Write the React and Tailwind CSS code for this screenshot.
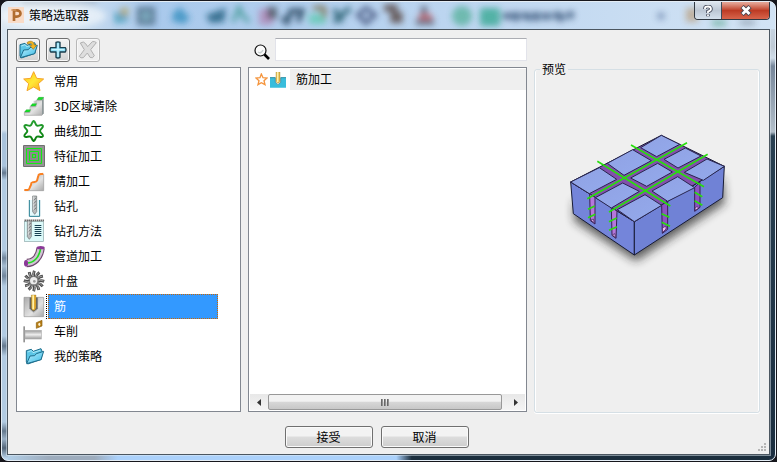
import { useState } from "react";
import clsx from "clsx";

function FolderShape() {
  return (
    <>
      <path d="M10 20 L25 16 L31 22 L54 14 L58 24 L55 46 L14 60 L10 54 Z" fill="#5cc6e6" stroke="#1d6d8c" strokeWidth="3" strokeLinejoin="round" />
      <path d="M11 59 L21 36 L35 35 L40 29 L62 22 L54 47 Z" fill="url(#folderFill)" stroke="#1d6d8c" strokeWidth="3" strokeLinejoin="round" />
      <path d="M14 24 L25 20 L30 26 L52 19" fill="none" stroke="#d2f7ff" strokeWidth="2" />
    </>
  );
}

function Drill({ x }) {
  return (
    <g transform={`translate(${x} 0)`}>
      <path d="M1 6 H13 V53 L7 61 L1 53 Z" fill="#b9bcbd" stroke="#6d7274" strokeWidth="2" />
      <path d="M2 20 L12 12 M2 30 L12 21 M2 40 L12 31 M2 50 L12 41" stroke="#777c7f" strokeWidth="3" />
      <path d="M4 7 V50" stroke="#f4f4f4" strokeWidth="2" />
    </g>
  );
}

const blades = [0, 30, 60, 90, 120, 150, 180, 210, 240, 270, 300, 330];

const icons = {
  star: (
    <path
      d="M32 8 L41 28 L62 30 L46 44 L51 65 L32 54 L12 65 L17 44 L2 30 L23 28 Z"
      fill="url(#starFill)"
      stroke="#f5a52a"
      strokeWidth="3"
      strokeLinejoin="round"
    />
  ),
  area: (
    <>
      <path d="M4 64 V54 L9 49 L22 49 V37 L27 32 H32 V20 L43 20 V14 L48 10 H62 V58 L57 64 Z" fill="url(#metal)" />
      <path d="M57 17 L62 10 V58 L57 64 Z" fill="#8e9899" />
      <path d="M4 64 H57 M4 64 V55 H21 V38 H39 V19 H56" fill="none" stroke="#a0a0a0" strokeWidth="2" />
      <path d="M5 54 L10 47 H23 L19 54 Z M23 36 L28 29 H41 L37 36 Z M42 17 L47 10 H62 L57 17 Z" fill="#18e026" stroke="#159b2b" strokeWidth="1" />
    </>
  ),
  curve: (
    <path
      d="M32 6 C38 8 36 17 42 20 C48 22 55 15 59 20 C63 26 51 30 51 36 C51 42 63 46 59 52 C55 57 48 50 42 53 C36 56 38 64 32 66 C26 64 28 56 22 53 C16 50 9 57 5 52 C1 46 13 42 13 36 C13 30 1 26 5 20 C9 15 16 22 22 20 C28 17 26 8 32 6 Z"
      fill="none"
      stroke="url(#greenLine)"
      strokeWidth="6"
    />
  ),
  feature: (
    <>
      <rect x="0" y="3" width="66" height="66" rx="3" fill="#707070" />
      <rect x="3" y="6" width="60" height="60" fill="#959595" />
      <rect x="9" y="12" width="48" height="48" rx="3" fill="#12ec12" />
      <rect x="12" y="15" width="42" height="42" fill="#8c8c8c" />
      <rect x="18" y="21" width="30" height="30" rx="2" fill="#12ec12" />
      <rect x="21" y="24" width="24" height="24" fill="#8c8c8c" />
      <rect x="27" y="30" width="12" height="12" fill="#12ec12" />
      <rect x="30" y="33" width="6" height="6" fill="#8c8c8c" />
    </>
  ),
  finish: (
    <>
      <path d="M5 64 L21 59 L29 43 L43 37 L48 19 L62 14 V65 H5 Z" fill="url(#metal)" />
      <path d="M5 65 H62 V16" fill="none" stroke="#999" strokeWidth="2" />
      <path d="M4 63 H14 C21 62 19 55 23 50 C27 45 21 43 28 40 C34 37 39 41 42 35 L46 20 C47 14 53 16 61 14" fill="none" stroke="#f98022" strokeWidth="6" />
    </>
  ),
  drill: (
    <>
      <path d="M19 18 V67 H50 V18" fill="#e5fafd" stroke="#247c91" strokeWidth="3" />
      <Drill x={28} />
    </>
  ),
  method: (
    <>
      <rect x="4.5" y="7.5" width="57" height="60" fill="#dcfafa" stroke="#8ba8a9" strokeWidth="2" />
      <path d="M5 4 H62" stroke="#222" strokeWidth="5" strokeDasharray="3 3" />
      <Drill x={12} />
      <path d="M35 19.5 H55 M35 25.5 H55 M35 31.5 H55 M35 37.5 H55 M35 43.5 H55 M35 49.5 H55" stroke="#174052" strokeWidth="3" />
    </>
  ),
  pipe: (
    <>
      <path d="M11 57 C31 57 49 42 53 12" fill="none" stroke="#70466f" strokeWidth="25" />
      <path d="M11 57 C31 57 49 42 53 12" fill="none" stroke="#d0c4d3" strokeWidth="18" />
      <path d="M11 57 C31 57 49 42 53 12" fill="none" stroke="#20dc20" strokeWidth="5" />
      <ellipse cx="9" cy="58" rx="6" ry="10" fill="#8b3998" />
      <ellipse cx="53" cy="11" rx="12" ry="5" fill="#8b3998" />
    </>
  ),
  blisk: (
    <g transform="translate(33 36)">
      {blades.map((a) => (
        <g key={a} transform={`rotate(${a})`}>
          <path d="M-3 -10 Q-8 -22 -3 -32 L5 -29 Q1 -20 4 -10 Z" fill="#4c4c4c" />
          <path d="M-1 -12 Q-4 -20 0 -29" fill="none" stroke="#bcbcbc" strokeWidth="2" />
        </g>
      ))}
      <circle r="14" fill="#777" />
      <circle cx="-1" cy="-1" r="11" fill="#ececec" />
      <circle cx="1" cy="1" r="4" fill="#999" />
    </g>
  ),
  rib: (
    <>
      <path d="M3 10 H20 V45 L32 56 L44 45 V10 H62 V68 H3 Z" fill="url(#metal)" stroke="#999" strokeWidth="2" />
      <path d="M20 10 V44 L32 54 L44 44 V10" fill="#656565" />
      <path d="M25 3 H39 V42 L35 49 H29 L25 42 Z" fill="#e2ab32" stroke="#8a6a1f" strokeWidth="1" />
      <path d="M30.5 4 V46" stroke="#fff2aa" strokeWidth="5" />
    </>
  ),
  turning: (
    <>
      <rect x="1" y="22" width="5" height="48" fill="#929292" />
      <rect x="6" y="34" width="49" height="26" fill="url(#bar)" stroke="#b0b0b0" strokeWidth="2" />
      <path d="M40 11 L57 4 V21 L40 28 Z" fill="#b77e16" stroke="#8c600f" strokeWidth="2" />
      <ellipse cx="49" cy="16" rx="3" ry="5" fill="#fff3d5" />
    </>
  ),
  folder: <FolderShape />,
};

const categories = [
  ["star", "常用"],
  ["area", "3D区域清除"],
  ["curve", "曲线加工"],
  ["feature", "特征加工"],
  ["finish", "精加工"],
  ["drill", "钻孔"],
  ["method", "钻孔方法"],
  ["pipe", "管道加工"],
  ["blisk", "叶盘"],
  ["rib", "筋"],
  ["turning", "车削"],
  ["folder", "我的策略"],
];

// Shared gradients for the small icons
function IconDefs() {
  return (
    <svg className="absolute h-0 w-0" aria-hidden="true">
      <defs>
        <linearGradient id="starFill" x1="0" y1="0" x2="1" y2="1">
          <stop offset="0" stopColor="#ffc814" />
          <stop offset=".5" stopColor="#ffe838" />
          <stop offset="1" stopColor="#ffa414" />
        </linearGradient>
        <linearGradient id="metal" x1="0" y1="0" x2="1" y2="1">
          <stop offset="0" stopColor="#aaa" />
          <stop offset=".6" stopColor="#e2e2e2" />
          <stop offset="1" stopColor="#a8a8a8" />
        </linearGradient>
        <linearGradient id="bar" x1="0" y1="0" x2="0" y2="1">
          <stop offset="0" stopColor="#999" />
          <stop offset=".5" stopColor="#eee" />
          <stop offset="1" stopColor="#999" />
        </linearGradient>
        <linearGradient id="greenLine" x1="0" y1="0" x2="0" y2="1">
          <stop offset="0" stopColor="#27a032" />
          <stop offset="1" stopColor="#077d0b" />
        </linearGradient>
        <linearGradient id="folderFill" x1="0" y1="0" x2="1" y2="1">
          <stop offset="0" stopColor="#c4f2ff" />
          <stop offset="1" stopColor="#35b9e4" />
        </linearGradient>
      </defs>
    </svg>
  );
}

// Blurred desktop seen through the glass title bar
function GlassBackdrop() {
  return (
    <svg className="absolute inset-0 h-full w-full" viewBox="0 0 773 27" preserveAspectRatio="none" aria-hidden="true">
      <defs>
        <filter id="glass" x="-20%" y="-60%" width="140%" height="220%">
          <feGaussianBlur stdDeviation="3" />
        </filter>
      </defs>
      <g filter="url(#glass)" opacity=".85">
        <ellipse cx="50" cy="14" rx="54" ry="13" fill="#f4f8fb" opacity=".8" />
        <rect x="20" y="-2" width="75" height="4" fill="#51657a" opacity=".5" />
        <path d="M112 11 L126 7 V19 L113 22 Z" fill="#2991ae" opacity=".75" />
        <rect x="119" y="6" width="7" height="7" fill="#b0a360" />
        <rect x="135" y="5" width="18" height="18" fill="#395973" opacity=".85" />
        <rect x="140" y="10" width="8" height="8" fill="#78aabd" />
        <path d="M171 11 L178 5 L188 16 L182 22 L170 19 Z" fill="#2a8abb" opacity=".85" />
        <path d="M204 13 L218 8 L224 6 L222 20 L208 21 Z" fill="#195979" opacity=".9" />
        <path d="M231 20 L237 6 L241 14 L247 20" fill="none" stroke="#479b99" strokeWidth="4" />
        <rect x="257" y="7" width="14" height="16" fill="#b25b96" opacity=".55" />
        <rect x="265" y="5" width="10" height="12" fill="#373f48" opacity=".8" />
        <path d="M280 16 L285 20 L289 9 H300 L296 20" fill="none" stroke="#213f59" strokeWidth="5" />
        <rect x="307" y="12" width="17" height="10" fill="#42c99d" opacity=".7" />
        <path d="M311 6 H322 V16" fill="none" stroke="#74683a" strokeWidth="4" />
        <path d="M332 20 L348 6 M332 7 L340 20" stroke="#285f70" strokeWidth="5" />
        <path d="M364 6 L373 13 L364 21 L356 13 Z" fill="none" stroke="#3c4b74" strokeWidth="4" />
        <path d="M382 6 H392 V21 M397 10 V21" stroke="#5b4b48" strokeWidth="7" fill="none" />
        <path d="M422 4 V15 M414 20 H432" stroke="#5c6273" strokeWidth="6" />
        <path d="M417 15 H430" stroke="#c35a62" strokeWidth="5" />
        <circle cx="460" cy="14" r="10" fill="#4aac91" opacity=".8" />
        <rect x="478" y="6" width="20" height="18" rx="3" fill="#2ba38a" opacity=".85" />
        <path d="M502 14 H510 M514 10 V19 M522 11 L528 18 M534 10 V19 M544 11 V18 M554 10 L560 19 M566 12 H572" stroke="#304c70" strokeWidth="5" />
        <path d="M500 14 H572" stroke="#425f83" strokeWidth="7" opacity=".6" />
        <circle cx="659" cy="14" r="4" fill="#607ba3" opacity=".7" />
        <rect x="684" y="6" width="12" height="14" fill="#b69369" opacity=".7" />
        <rect x="710" y="18" width="14" height="6" fill="#399671" opacity=".6" />
        <rect x="738" y="18" width="15" height="5" fill="#545f6d" opacity=".5" />
      </g>
    </svg>
  );
}

function TitleBar() {
  return (
    <header className="relative flex h-[27px] justify-between overflow-hidden rounded-t-md bg-linear-to-r from-[#dae6f1] from-5% via-[#a9c9ec] via-20% to-[#d2e3f4]">
      <GlassBackdrop />
      <div className="relative flex items-center gap-[5px] pb-0.5 pl-[6px]">
        <svg className="h-4 w-4" viewBox="0 0 48 48" aria-hidden="true">
          <rect width="48" height="48" fill="#f9dcc8" />
          <path d="M18 42 V10 H25 C42 9 41 29 26 29 H18" fill="none" stroke="#b16d30" strokeWidth="8" />
          <path d="M10 9 H25" stroke="#d1935b" strokeWidth="5" />
        </svg>
        <h1 className="text-xs">策略选取器</h1>
      </div>
      <div className="relative mr-[5px] flex h-[18px] overflow-hidden rounded-b border border-t-0 border-[#303943]">
        <button type="button" aria-label="帮助" className="flex w-[27px] items-center justify-center border-r border-[#404b58] bg-linear-to-b from-[#dde5ee] via-[#bcc7d4] via-50% to-[#d5e1ed]">
          <svg className="h-3 w-3" viewBox="0 0 12 12" fill="none" aria-hidden="true">
            <path d="M3 4 V3 Q3 1.5 6 1.5 Q9 1.5 9 4 Q9 5.5 6 6.5 V8 M6 9.2 V11.2" stroke="#464c5c" strokeWidth="3.6" />
            <path d="M3 4 V3 Q3 1.5 6 1.5 Q9 1.5 9 4 Q9 5.5 6 6.5 V8 M6 9.4 V11" stroke="#fff" strokeWidth="1.8" />
          </svg>
        </button>
        <button type="button" aria-label="关闭" className="flex w-[47px] items-center justify-center bg-linear-to-b from-[#e3a394] from-5% via-[#bd3b24] via-50% to-[#d8644b]">
          <svg className="h-[11px] w-3" viewBox="0 0 12 11" fill="none" aria-hidden="true">
            <path d="M2 1.5 L10 9.5 M10 1.5 L2 9.5" stroke="#4d4650" strokeWidth="4.6" />
            <path d="M2.5 2 L9.5 9 M9.5 2 L2.5 9" stroke="#fff" strokeWidth="2.8" />
          </svg>
        </button>
      </div>
    </header>
  );
}

function ToolButton({ label, disabled, children }) {
  return (
    <button
      type="button"
      aria-label={label}
      disabled={disabled}
      className="flex h-6 w-6 items-center justify-center rounded-[3px] border border-[#707070] bg-linear-to-b from-[#f4f4f4] to-[#d2d2d2] shadow-[inset_0_0_0_1px_#f8f8f8] disabled:border-[#b8b8b8] disabled:from-[#f1f1f1] disabled:to-[#eeeeee]"
    >
      {children}
    </button>
  );
}

function DialogButton({ children }) {
  return (
    <button
      type="button"
      className="h-[22px] w-[88px] rounded-[3px] border border-[#707070] bg-linear-to-b from-[#f3f3f3] from-45% via-[#dddddd] via-50% to-[#cdcdcd] text-xs shadow-[inset_0_0_0_1px_#fafafa]"
    >
      {children}
    </button>
  );
}

// Solid block with the machined ribs and the tool paths in green
function RibPreview() {
  const tops = [
    "62,186 148,143 200,178 118,221",
    "172,130 248,89 304,122 222,166",
    "272,83 334,46 389,73 320,110",
    "136,233 218,189 268,214 184,264",
    "242,174 323,130 367,156 290,199",
    "342,118 406,84 453,108 384,144",
    "202,269 285,224 335,256 253,305",
    "306,213 383,170 434,203 353,244",
    "403,157 471,117 523,139 460,181",
  ];
  return (
    <svg className="mx-auto mt-[43px] h-[150px] w-[194px]" viewBox="0 0 582 450" role="img" aria-label="筋加工">
      <defs>
        <filter id="shadow" x="-20%" y="-20%" width="140%" height="150%">
          <feGaussianBlur stdDeviation="14" />
        </filter>
        <linearGradient id="topFace" x1="0" y1="0" x2="1" y2="1">
          <stop offset="0" stopColor="#90a2e4" />
          <stop offset="1" stopColor="#94aaec" />
        </linearGradient>
      </defs>
      <path d="M72 240 L253 360 L518 170 L524 250 L258 424 L72 302 Z" fill="#222" opacity=".7" filter="url(#shadow)" />
      <g stroke="#171b35" strokeWidth="3" strokeLinejoin="round">
        <path d="M62 186 L253 305 V405 L70 281 Z" fill="#7485da" />
        <path d="M253 305 L523 139 L518 233 L253 405 Z" fill="#7082d6" />
        <path d="M62 186 L334 46 L523 139 L253 305 Z" fill="#8350ac" />
      </g>
      <g stroke="#372052" strokeWidth="3">
        <path d="M119 221 L135 232 V312 L121 302 Z" fill="#b577dc" />
        <path d="M184 263 L201 273 L198 355 L186 346 Z" fill="#b577dc" />
        <path d="M335 255 L353 244 V328 L337 340 Z" fill="#8d52c4" />
        <path d="M434 202 L450 187 V262 L434 274 Z" fill="#8d52c4" />
      </g>
      <path d="M123 300 L130 297 L133 309 Z M187 345 L194 341 L197 353 Z M337 324 L348 318 V327 L338 337 Z M435 264 L442 259 L445 265 L436 271 Z" fill="#efb8f6" stroke="#372052" strokeWidth="2" />
      <g fill="url(#topFace)" stroke="#29264f" strokeWidth="3" strokeLinejoin="round">
        {tops.map((points) => (
          <polygon key={points} points={points} />
        ))}
      </g>
      <path
        d="M112 236 L411 68 M177 276 L473 103 M142 124 L361 258 M243 75 L462 200 M114 268 L134 258 M114 293 L136 283 M177 305 L200 294 M177 331 L201 320 M335 281 L358 292 M335 307 L360 319 M434 217 L457 230 M434 242 L457 256"
        stroke="#28de0c"
        strokeWidth="5"
      />
    </svg>
  );
}

function ScrollBar() {
  return (
    <div className="mx-px mb-px flex h-4 bg-linear-to-b from-[#e8e8e8] to-[#f4f4f4]">
      <button type="button" aria-label="向左" className="flex w-[18px] items-center justify-center">
        <svg className="h-[7px] w-1" viewBox="0 0 4 7" aria-hidden="true">
          <path d="M4 0 V7 L0 3.5 Z" fill="#333" />
        </svg>
      </button>
      <div className="flex flex-1 pr-[5px]">
        <div className="flex flex-1 items-center justify-center gap-px rounded-[2px] border border-[#989898] bg-linear-to-b from-[#f2f2f2] from-45% via-[#d8d8d8] via-50% to-[#c7c7c7]">
          <span className="h-[7px] w-0.5 bg-linear-to-r from-[#555] to-[#aaa]" />
          <span className="h-[7px] w-0.5 bg-linear-to-r from-[#555] to-[#aaa]" />
          <span className="h-[7px] w-0.5 bg-linear-to-r from-[#555] to-[#aaa]" />
        </div>
      </div>
      <button type="button" aria-label="向右" className="flex w-[18px] items-center justify-center">
        <svg className="h-[7px] w-1" viewBox="0 0 4 7" aria-hidden="true">
          <path d="M0 0 V7 L4 3.5 Z" fill="#333" />
        </svg>
      </button>
    </div>
  );
}

export default function App() {
  const [selected, setSelected] = useState("筋");
  const [query, setQuery] = useState("");

  return (
    <div className="flex min-h-screen bg-[#17171d] p-px font-['Noto_Sans_CJK_SC',sans-serif] text-xs text-black">
      <IconDefs />
      <div className="flex flex-1 flex-col rounded-[7px] border border-[#e4edf5] [background:linear-gradient(#d9e6f2_0,#d3e0ec_128px,#a9c3dc_132px,#a9c3dc_164px,#64788e_171px,#b2cbe2_178px,#b2cbe2_248px,#71869c_256px,#a4bbd0_264px,#71869c_274px,#b2cbe2_284px,#b2cbe2_334px,#65798e_344px,#b2cbe2_354px,#b2cbe2_420px,#65798e_429px,#9ab0c6_437px,#536579_446px,#b8d3ec_456px)_left_top/6px_100%_no-repeat,linear-gradient(#d1e2f3_0,#bfcad5_45px,#d0dce8_56px,#76869a_64px,#b3bfca_130px,#294052_134px,#1b2e40_100%)_right_top/6px_100%_no-repeat,linear-gradient(to_right,#b5d4ee_0,#9dacbd_6%,#9dacbd_12%,#abd1fb_15%,#abd1fb_51%,#1b2e3d_53%)_left_bottom/100%_10px_no-repeat,#b5d4ee]">
        <TitleBar />

        <main className="mx-[5px] mb-[5px] flex flex-1 flex-col border border-[#4b5660] bg-[#efefef] shadow-[0_0_0_1px_#e1ebf480]">
          <div className="grid flex-1 grid-cols-[225fr_279fr_226fr] grid-rows-[24px_1fr] gap-x-[7px] gap-y-[5px] pt-2 pr-[9px] pl-2">
            <div className="flex gap-[6px]">
              <ToolButton label="打开">
                <svg className="h-5 w-5" viewBox="4 6 60 60" aria-hidden="true">
                  <FolderShape />
                  <path d="M31 14 C41 6 52 10 53 21 H60 L50 34 L39 22 H46 C45 15 40 14 34 19 Z" fill="#f3b620" stroke="#9b721a" strokeWidth="2" />
                </svg>
              </ToolButton>
              <ToolButton label="添加">
                <svg className="h-[18px] w-[18px]" viewBox="0 0 54 54" aria-hidden="true">
                  <path d="M21 4 Q27 1 33 4 V20 H49 Q53 26 49 33 H33 V49 Q27 53 21 49 V33 H5 Q1 27 5 20 H21 Z" fill="#84dbf4" stroke="#193d4c" strokeWidth="4" strokeLinejoin="round" />
                  <path d="M27 7 V47 M8 26 H46" stroke="#c8f4ff" strokeWidth="4" />
                </svg>
              </ToolButton>
              <ToolButton label="删除" disabled>
                <svg className="h-5 w-5" viewBox="0 0 60 60" aria-hidden="true">
                  <path d="M7 9 Q17 2 23 11 L29 20 L43 5 Q50 3 55 8 L38 29 L49 47 Q44 57 36 52 L28 39 L16 53 Q8 56 4 49 L19 29 Z" fill="#dedede" stroke="#b0b0b0" strokeWidth="3" strokeLinejoin="round" />
                </svg>
              </ToolButton>
            </div>

            <div className="flex items-start gap-1 pl-[6px]">
              <label htmlFor="search" aria-label="搜索" className="pt-[6px]">
                <svg className="h-[17px] w-[17px]" viewBox="0 0 17 17" fill="none" aria-hidden="true">
                  <circle cx="6.5" cy="6.5" r="5.5" fill="#fafafa" stroke="#111" strokeWidth="1.2" />
                  <path d="M4 8 Q7 10 9 6" stroke="#c7d1d1" strokeWidth="1.5" />
                  <path d="M10.5 10.5 L15 15" stroke="#000" strokeWidth="2.6" />
                </svg>
              </label>
              <input
                id="search"
                type="text"
                value={query}
                onChange={(e) => setQuery(e.target.value)}
                className="h-[23px] min-w-0 flex-1 border border-[#e2e3ea] border-t-[#abadb3] bg-white px-1 outline-none"
              />
            </div>

            <fieldset className="col-start-3 row-span-2 row-start-1 -mb-px mt-[23px] min-w-0 rounded-[3px] border border-[#d5dfe5] shadow-[inset_1px_0_0_#fff,inset_-1px_0_0_#fff,0_1px_0_#fff]">
              <legend className="ml-[5px] px-0.5 leading-4">预览</legend>
              <RibPreview />
            </fieldset>

            <ul className="border border-[#828790] bg-white pt-px">
              {categories.map(([icon, name]) => (
                <li key={name}>
                  <button type="button" onClick={() => setSelected(name)} className="flex h-[25px] w-full pr-[22px] pl-[6px] text-left">
                    <svg className="h-[25px] w-[22px] shrink-0" viewBox="0 0 66 75" aria-hidden="true">
                      {icons[icon]}
                    </svg>
                    <span
                      className={clsx(
                        "ml-px flex flex-1 border-l border-dotted",
                        name === selected ? "border-black" : "border-transparent"
                      )}
                    >
                      <span
                        className={clsx(
                          "ml-px flex flex-1 items-center border border-dotted pb-0.5 pl-[5px]",
                          name === selected ? "border-[#cc6600] bg-[#3399ff] text-white" : "border-transparent"
                        )}
                      >
                        {name}
                      </span>
                    </span>
                  </button>
                </li>
              ))}
            </ul>

            <div className="flex flex-col justify-between border border-[#828790] bg-white">
              <ul className="pt-px">
                <li>
                  <button type="button" className="flex h-[21px] w-full items-center pl-[6px] text-left">
                    <svg className="mr-0.5 h-[13px] w-[13px]" viewBox="0 0 39 39" aria-hidden="true">
                      <path d="M19 3 L24 14 L36 15 L27 23 L30 35 L19 29 L9 35 L12 23 L3 15 L15 14 Z" fill="#fff" stroke="#f5953d" strokeWidth="4" />
                    </svg>
                    <svg className="mr-1 h-4 w-4" viewBox="0 0 48 48" aria-hidden="true">
                      <path d="M0 16 H16 V31 L24 39 L32 31 V16 H48 V47 H0 Z" fill="#39bddc" />
                      <path d="M0 17 H16 V31 L24 38 L32 31 V17 H48" fill="none" stroke="#2a7787" strokeWidth="2" />
                      <path d="M18 0 H30 V27 L27 33 H21 L18 27 Z" fill="#e0b548" stroke="#8f7530" strokeWidth="1" />
                      <path d="M23 0 V31" stroke="#fff1ac" strokeWidth="5" />
                    </svg>
                    <span className="flex h-full flex-1 items-center bg-[#efefef] pb-0.5 pl-[6px]">筋加工</span>
                  </button>
                </li>
              </ul>
              <ScrollBar />
            </div>
          </div>

          <footer className="relative flex justify-center gap-2 pt-[14px] pr-6 pb-[6px]">
            <DialogButton>接受</DialogButton>
            <DialogButton>取消</DialogButton>
            <svg className="absolute right-[3px] bottom-0.5 h-[9px] w-[9px]" viewBox="0 0 9 9" fill="#b5b5b5" aria-hidden="true">
              <path d="M7 0h2v2h-2z M4 3h2v2h-2z M7 3h2v2h-2z M1 6h2v2h-2z M4 6h2v2h-2z M7 6h2v2h-2z" />
            </svg>
          </footer>
        </main>
      </div>
    </div>
  );
}
